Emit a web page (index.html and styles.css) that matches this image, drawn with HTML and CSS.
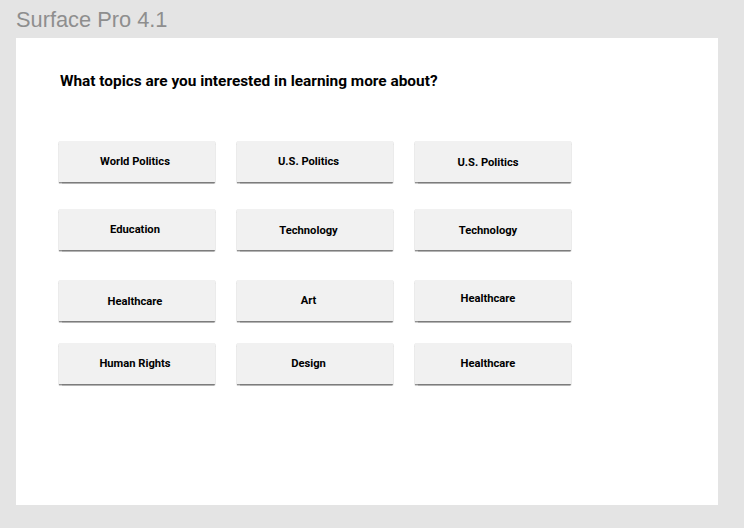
FILE: index.html
```html
<!DOCTYPE html>
<html>
<head>
<meta charset="utf-8">
<link rel="stylesheet" href="styles.css">
</head>
<body>
<div class="device-label">Surface Pro 4.1</div>
<main class="panel">
  <h1 class="question">What topics are you interested in learning more about?</h1>
  <div class="topics">
    <div class="row row-1">
      <button class="topic">World Politics</button>
      <button class="topic">U.S. Politics</button>
      <button class="topic low">U.S. Politics</button>
    </div>
    <div class="row row-2">
      <button class="topic">Education</button>
      <button class="topic low">Technology</button>
      <button class="topic low">Technology</button>
    </div>
    <div class="row row-3">
      <button class="topic low">Healthcare</button>
      <button class="topic">Art</button>
      <button class="topic high">Healthcare</button>
    </div>
    <div class="row row-4">
      <button class="topic">Human Rights</button>
      <button class="topic">Design</button>
      <button class="topic">Healthcare</button>
    </div>
  </div>
</main>
</body>
</html>
```
FILE: styles.css
```css
html, body {
  margin: 0;
  padding: 0;
}
body {
  background: #e4e4e4;
  width: 744px;
  height: 528px;
  overflow: hidden;
  font-family: Roboto, "Liberation Sans", sans-serif;
}
.device-label {
  font-family: "Liberation Sans", Arial, sans-serif;
  font-size: 21.8px;
  color: #8e8e8e;
  height: 38px;
  line-height: 24px;
  padding: 8px 0 0 16px;
  box-sizing: border-box;
}
.panel {
  margin-left: 16px;
  width: 702px;
  height: 467px;
  background: #ffffff;
  box-sizing: border-box;
  padding: 33px 0 0 44px;
}
.question {
  margin: 0;
  font-size: 15.4px;
  font-weight: 700;
  color: #000;
  line-height: 20px;
}
.topics {
  display: flex;
  flex-direction: column;
}
.row {
  display: flex;
  gap: 22px;
  margin-left: -1px;
}
.row-1 { margin-top: 50px; }
.row-2 { margin-top: 27px; }
.row-3 { margin-top: 30px; }
.row-4 { margin-top: 22px; }
.topic {
  width: 156px;
  height: 41px;
  border: none;
  background: #f1f1f1;
  box-shadow: 0 1px 1px rgba(0,0,0,0.35), 0 1.5px 1px rgba(0,0,0,0.25);
  font-family: Roboto, "Liberation Sans", sans-serif;
  font-weight: 700;
  font-size: 11.2px;
  color: #000;
  padding: 0 4px 0 0;
  margin: 0;
}
.topic:nth-child(2) { padding-right: 13px; }
.topic:nth-child(3) { padding-right: 10px; }
.topic.low { padding-top: 2px; }
.topic.high { padding-bottom: 4px; }
```
